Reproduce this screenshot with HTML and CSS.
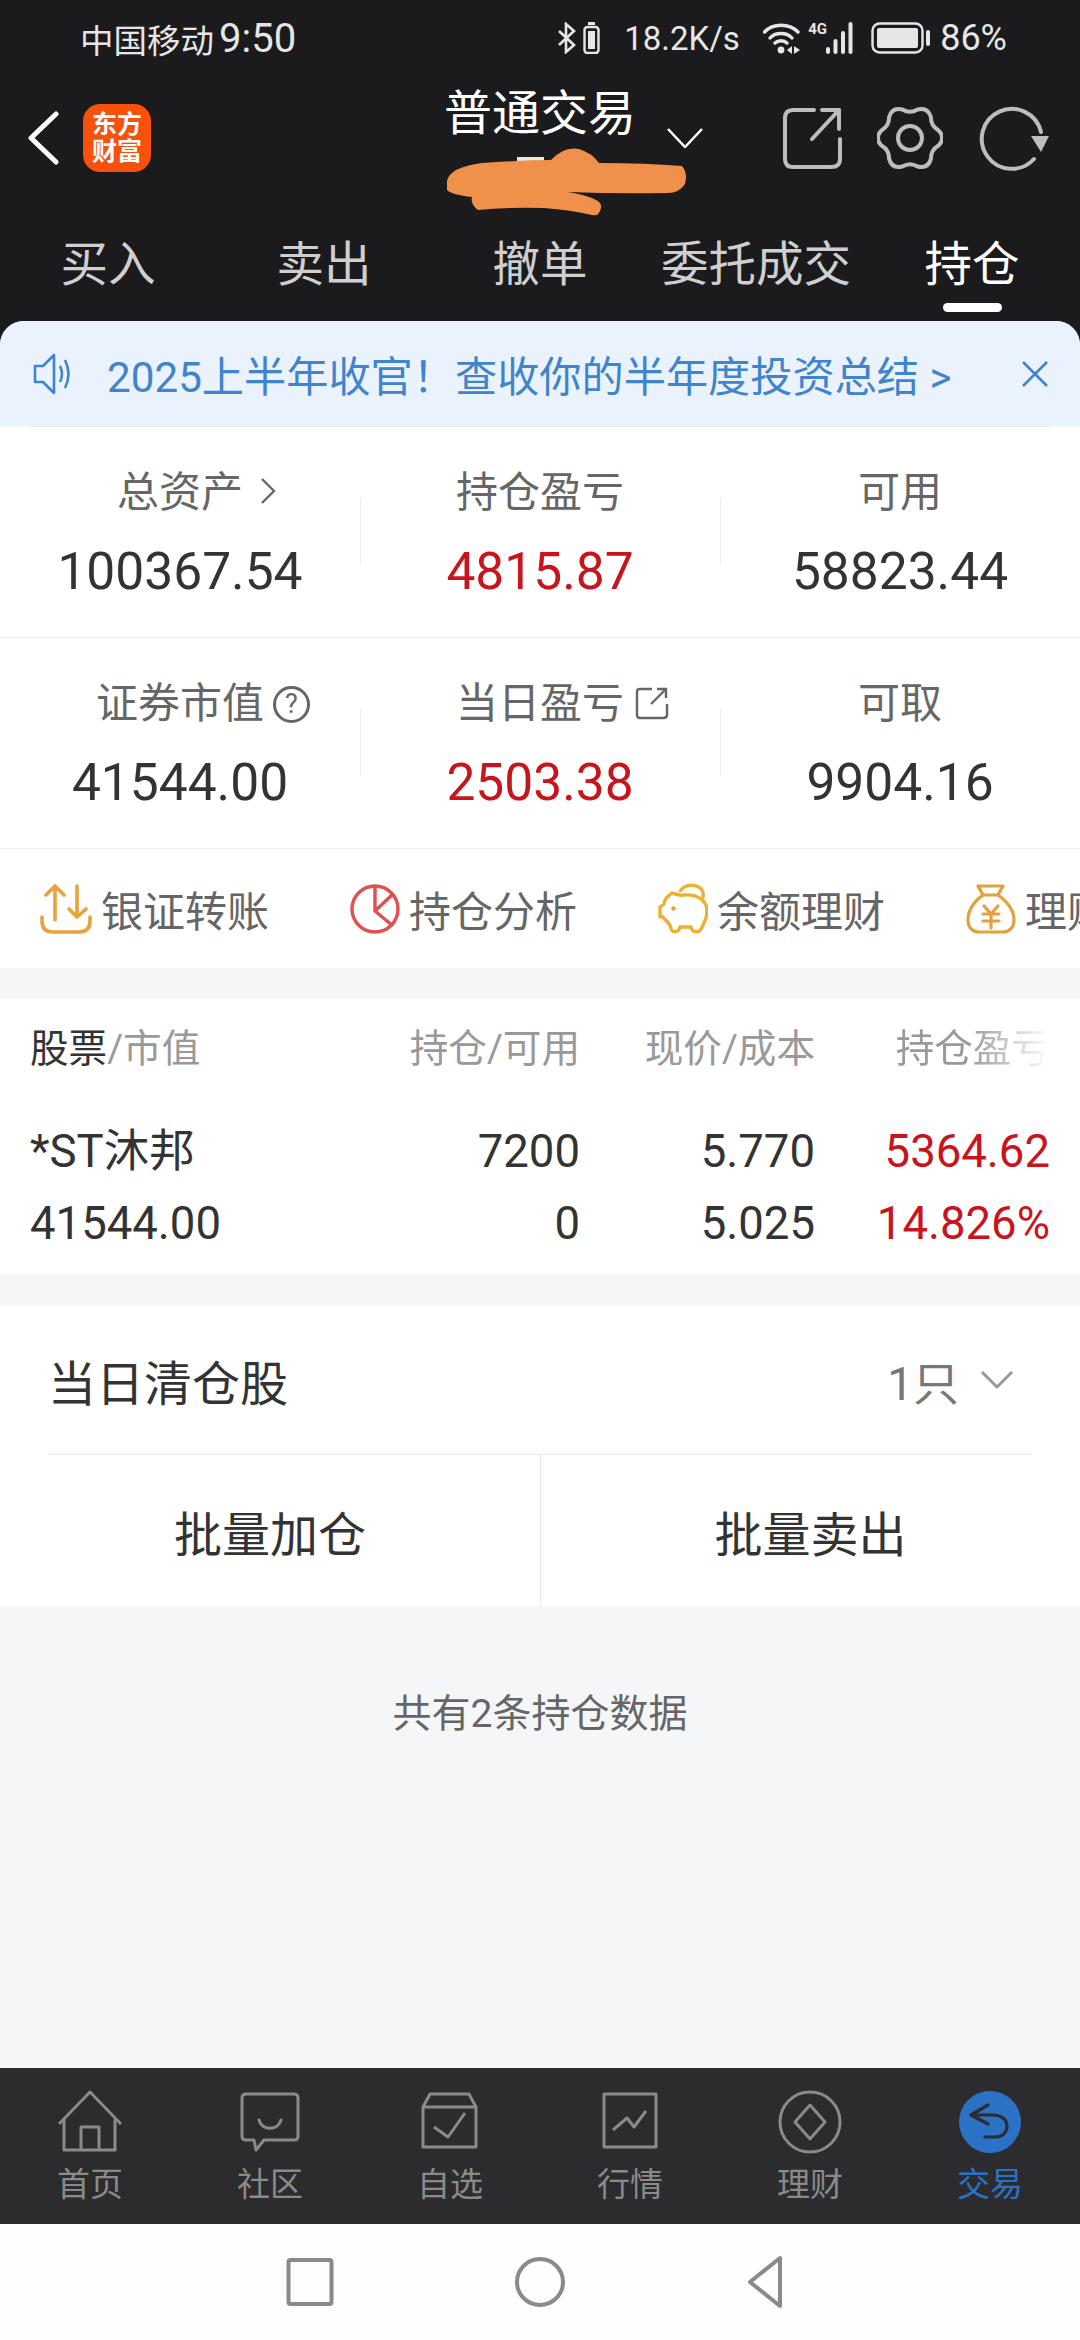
FILE: index.html
```html
<!DOCTYPE html>
<html lang="zh-CN">
<head>
<meta charset="utf-8">
<title>普通交易</title>
<link rel="stylesheet" href="styles.css">
</head>
<body>
<div class="screen">
  <div class="status">
    <div class="status-left">中国移动<span class="clock">9:50</span></div>
    <div class="status-right">
      <svg class="st-bt" width="19" height="32" viewBox="0 0 19 32"><path d="M2 9 L17 23 L9 30 V2 L17 9 L2 23" fill="none" stroke="#e6e6e6" stroke-width="2.6"/></svg>
      <svg class="st-mini" width="17" height="32" viewBox="0 0 17 32"><rect x="1.5" y="5" width="14" height="26" rx="3" fill="none" stroke="#e6e6e6" stroke-width="2.4"/><rect x="5" y="9" width="7" height="18" fill="#e6e6e6"/><rect x="5" y="0" width="7" height="3" fill="#e6e6e6"/></svg>
      <span class="st-speed">18.2K/s</span>
      <svg class="st-wifi" width="38" height="33" viewBox="0 0 38 33"><g fill="none" stroke="#e6e6e6" stroke-width="3.4" stroke-linecap="round"><path d="M1.5 10 C10 1 26 1 35 10"/><path d="M7 16 C12 10 24 10 29 16"/><path d="M12 21 C15 18 21 18 24 21"/></g><circle cx="18" cy="28" r="3.4" fill="#e6e6e6"/><path d="M29 24 V32 L24 28Z M31 24 V32 L37 28Z" fill="#e6e6e6"/></svg>
      <div class="st-signal">
        <span class="st-4g">4G</span>
        <svg width="33" height="32" viewBox="0 0 33 32"><g fill="#e6e6e6"><rect x="0" y="25" width="4" height="7" rx="2"/><rect x="7.500" y="17" width="4" height="15" rx="2"/><rect x="15" y="9" width="4" height="23" rx="2"/><rect x="22.500" y="0" width="4" height="32" rx="2"/></g></svg>
      </div>
      <svg class="st-batt" width="60" height="32" viewBox="0 0 60 32"><rect x="1.500" y="1.500" width="50" height="29" rx="7" fill="none" stroke="#e6e6e6" stroke-width="2.400"/><rect x="6" y="6" width="41" height="20" rx="2" fill="#e6e6e6"/><rect x="55" y="8" width="4" height="16" rx="2" fill="#e6e6e6"/></svg>
      <span class="st-pct">86%</span>
    </div>
  </div>

  <div class="appbar">
    <div class="appbar-left">
      <svg class="back" width="32" height="54" viewBox="0 0 32 54"><path d="M29 3 L4 27 L29 51" fill="none" stroke="#fff" stroke-width="5" stroke-linecap="round" stroke-linejoin="round"/></svg>
      <div class="logo">东方<br>财富</div>
    </div>
    <div class="appbar-title">
      <span class="title-text">普通交易</span>
      <svg class="title-caret" width="36" height="20" viewBox="0 0 36 20"><path d="M1 1 L18 19 L35 1" fill="none" stroke="#fff" stroke-width="2.500"/></svg>
      <svg class="account-mask" width="240" height="68" viewBox="0 0 240 68"><rect x="71" y="9" width="27" height="9" fill="#e9e4de"/><path d="M1 33 Q4 19 36 15 Q80 12 105 12 Q118 -2 133 1 Q146 5 153 15 Q200 15 236 18 Q242 25 239 36 Q233 45 222 45 Q170 46 122 44 Q158 50 155 60 Q153 69 146 67 Q125 62 98 60 Q60 59 32 62 Q24 56 26 49 Q6 47 1 42Z" fill="#ef914a"/></svg>
    </div>
    <div class="appbar-tools">
      <svg width="60" height="64" viewBox="0 0 60 64"><g fill="none" stroke="#bdbdbd" stroke-width="4" stroke-linecap="round" stroke-linejoin="round"><path d="M32 4 H11 Q3 4 3 12 V53 Q3 61 11 61 H49 Q58 61 58 53 V33"/><path d="M30 33 L57 4"/><path d="M40 4 H57 V23"/></g></svg>
      <svg width="66" height="66" viewBox="0 0 66 66"><path d="M61.500 25.400 Q69 33 61.500 40.600 Q53.800 45 53.900 53.900 Q51 64.200 40.600 61.500 Q33 57 25.400 61.500 Q15 64.200 12.100 53.900 Q12.200 45 4.500 40.600 Q-3 33 4.500 25.400 Q12.200 21 12.100 12.100 Q15 1.800 25.400 4.500 Q33 9 40.600 4.500 Q51 1.800 53.900 12.100 Q53.800 21 61.500 25.400Z" fill="none" stroke="#bdbdbd" stroke-width="4"/><circle cx="33" cy="33" r="12" fill="none" stroke="#bdbdbd" stroke-width="4"/></svg>
      <svg width="74" height="68" viewBox="0 0 74 68"><path d="M63 28 A30 30 0 1 0 56 55" fill="none" stroke="#bdbdbd" stroke-width="4" stroke-linecap="round"/><path d="M53 32 H71 L63 48Z" fill="#bdbdbd"/></svg>
    </div>
  </div>

  <div class="tabs">
    <div class="tab">买入</div>
    <div class="tab">卖出</div>
    <div class="tab">撤单</div>
    <div class="tab">委托成交</div>
    <div class="tab tab-active">持仓<i class="tab-bar"></i></div>
  </div>

  <div class="content">
    <div class="notice">
      <svg class="notice-icon" width="42" height="42" viewBox="0 0 42 42"><g fill="none" stroke="#3f84cc" stroke-width="2.600" stroke-linejoin="round"><path d="M2 13 H10 L21 2 V40 L10 29 H2Z"/><path d="M27 13 Q31 21 27 29"/><path d="M32 7 Q39 21 32 35"/></g></svg>
      <span class="notice-text">2025上半年收官！查收你的半年度投资总结 &gt;</span>
      <svg class="notice-close" width="28" height="28" viewBox="0 0 28 28"><path d="M2 2 L26 26 M26 2 L2 26" fill="none" stroke="#3f84cc" stroke-width="2.600"/></svg>
    </div>
    <div class="notice-rule"></div>

    <div class="stats">
      <div class="stat">
        <div class="stat-label"><span class="label-anchor">总资产<svg class="hang hang-chevron" width="16" height="28" viewBox="0 0 16 28"><path d="M2 2 L14 14 L2 26" fill="none" stroke="#666" stroke-width="2.400"/></svg></span></div>
        <div class="stat-value">100367.54</div>
      </div>
      <div class="stat stat-split">
        <div class="stat-label">持仓盈亏</div>
        <div class="stat-value up">4815.87</div>
      </div>
      <div class="stat stat-split">
        <div class="stat-label">可用</div>
        <div class="stat-value">58823.44</div>
      </div>
    </div>
    <div class="stats">
      <div class="stat">
        <div class="stat-label"><span class="label-anchor">证券市值<span class="hang hang-help">?</span></span></div>
        <div class="stat-value">41544.00</div>
      </div>
      <div class="stat stat-split">
        <div class="stat-label"><span class="label-anchor">当日盈亏<svg class="hang hang-share" width="34" height="34" viewBox="0 0 34 34"><g fill="none" stroke="#666" stroke-width="2.400"><path d="M17 3 H5 Q2 3 2 6 V29 Q2 32 5 32 H28 Q32 32 32 29 V18"/><path d="M16 18 L31 3"/><path d="M22 3 H31 V12"/></g></svg></span></div>
        <div class="stat-value up">2503.38</div>
      </div>
      <div class="stat stat-split">
        <div class="stat-label">可取</div>
        <div class="stat-value">9904.16</div>
      </div>
    </div>

    <div class="actions">
      <div class="action">
        <svg width="52" height="50" viewBox="0 0 52 50"><g fill="none" stroke="#e8a33d" stroke-width="3.600" stroke-linecap="round" stroke-linejoin="round"><path d="M15 36 V2 M6 11 L15 2 L24 11"/><path d="M37 2 V33 M29 25 L37 33 L46 25"/><path d="M2 33 V37 Q2 48 13 48 H39 Q50 48 50 37 V33"/></g></svg>
        <span>银证转账</span>
      </div>
      <div class="action">
        <svg width="50" height="50" viewBox="0 0 50 50"><g fill="none" stroke="#e0504f" stroke-width="3.400" stroke-linejoin="round"><circle cx="25" cy="25" r="23"/><path d="M25 2 V27 L43 10 M25 27 L43 42"/></g></svg>
        <span>持仓分析</span>
      </div>
      <div class="action">
        <svg width="50" height="52" viewBox="0 0 50 52"><g fill="none" stroke="#eeb030" stroke-width="3.400" stroke-linejoin="round"><path d="M14 10 C20 12 22 13 26 12 C40 11 49 18 49 28 C49 36 46 40 43 46 C41 50 34 50 33 44 H22 C21 50 13 50 13 45 C12 40 8 38 5 34 H2 V24 L6 21 C6 16 10 13 14 10Z"/><path d="M22 9 C25 0 42 0 45 9 C46 13 45 15 44 17"/></g><circle cx="15.500" cy="25.500" r="2.200" fill="#e59f3b"/></svg>
        <span>余额理财</span>
      </div>
      <div class="action">
        <svg width="50" height="50" viewBox="0 0 50 50"><g fill="none" stroke="#e59f3b" stroke-width="3.200" stroke-linejoin="round" stroke-linecap="round"><path d="M17 11 L12 2 H37 L32 11Z"/><path d="M17 11 C6 19 2 27 2 36 C2 44 7 48 13 48 H37 C43 48 48 44 48 36 C48 27 43 19 32 11"/><path d="M18 22 L25 30 L32 22 M17 30 H33 M17 37 H33 M25 30 V44"/></g></svg>
        <span>理财产品</span>
      </div>
    </div>

    <div class="holdings">
      <div class="grid grid-head">
        <div><span class="head-strong">股票</span>/市值</div>
        <div class="num">持仓/可用</div>
        <div class="num">现价/成本</div>
        <div class="num fade-out">持仓盈亏</div>
      </div>
      <div class="grid grid-row">
        <div>*ST沐邦</div>
        <div class="num">7200</div>
        <div class="num">5.770</div>
        <div class="num up">5364.62</div>
      </div>
      <div class="grid grid-row">
        <div>41544.00</div>
        <div class="num">0</div>
        <div class="num">5.025</div>
        <div class="num up">14.826%</div>
      </div>
    </div>

    <div class="cleared">
      <div class="cleared-head">
        <span class="cleared-title">当日清仓股</span>
        <span class="cleared-count">1只<svg width="34" height="20" viewBox="0 0 34 20"><path d="M2 2 L17 17 L32 2" fill="none" stroke="#999" stroke-width="3"/></svg></span>
      </div>
      <div class="batch">
        <div class="batch-btn">批量加仓</div>
        <div class="batch-btn">批量卖出</div>
      </div>
    </div>

    <div class="footnote">共有2条持仓数据</div>
  </div>

  <nav class="nav">
    <div class="nav-item">
      <svg width="64" height="64" viewBox="0 0 64 64"><g fill="none" stroke="#8a8a8a" stroke-width="3" stroke-linejoin="round"><path d="M1 34 L32 2 L63 34"/><path d="M6 29 V60 H57 V29"/><path d="M23 60 V37 H41 V60"/></g></svg>
      <span>首页</span>
    </div>
    <div class="nav-item">
      <svg width="64" height="64" viewBox="0 0 64 64"><g fill="none" stroke="#8a8a8a" stroke-width="3" stroke-linejoin="round"><path d="M8 4 H56 Q60 4 60 8 V46 Q60 50 56 50 H26 L18 60 L16 50 H8 Q4 50 4 46 V8 Q4 4 8 4Z"/><path d="M21 30 C24 41 40 41 43 30" stroke-linecap="round"/></g></svg>
      <span>社区</span>
    </div>
    <div class="nav-item">
      <svg width="64" height="64" viewBox="0 0 64 64"><g fill="none" stroke="#8a8a8a" stroke-width="3" stroke-linejoin="round"><path d="M5 17 V57 H58 V17Z"/><path d="M5 17 L12 4 H51 L58 17"/><path d="M16 37 L30 47 L47 23"/></g></svg>
      <span>自选</span>
    </div>
    <div class="nav-item">
      <svg width="64" height="64" viewBox="0 0 64 64"><g fill="none" stroke="#8a8a8a" stroke-width="3" stroke-linejoin="round"><rect x="6" y="4" width="52" height="53"/><path d="M15 40 L29 28 L36 37 L48 21"/></g></svg>
      <span>行情</span>
    </div>
    <div class="nav-item">
      <svg width="64" height="64" viewBox="0 0 64 64"><g fill="none" stroke="#8a8a8a" stroke-width="3" stroke-linejoin="round"><circle cx="32" cy="32" r="30"/><path d="M32 15 L47 32 L32 49 L17 32Z"/></g></svg>
      <span>理财</span>
    </div>
    <div class="nav-item nav-active">
      <svg width="64" height="64" viewBox="0 0 64 64"><circle cx="32" cy="32" r="31" fill="#2b72c6"/><g fill="none" stroke="#2c2c2e" stroke-width="3.200" stroke-linecap="round" stroke-linejoin="round"><path d="M30 15 L13 25 L30 34"/><path d="M13 25 H34 C44 25 49 30 49 36 C49 43 44 47 38 47 H27"/></g></svg>
      <span>交易</span>
    </div>
  </nav>

  <div class="sysbar">
    <svg width="60" height="60" viewBox="0 0 60 60"><rect x="8.500" y="8" width="43" height="44" rx="2" fill="none" stroke="#8a8a8a" stroke-width="4"/></svg>
    <svg width="60" height="60" viewBox="0 0 60 60"><circle cx="30" cy="30" r="23" fill="none" stroke="#8a8a8a" stroke-width="4"/></svg>
    <svg width="60" height="60" viewBox="0 0 60 60"><path d="M40 6 V54 L10 30Z" fill="none" stroke="#8a8a8a" stroke-width="4" stroke-linejoin="round"/></svg>
  </div>
</div>
</body>
</html>
```

FILE: styles.css
```css
* { box-sizing: border-box; }

html, body {
  margin: 0;
  padding: 0;
}

body {
  width: 1080px;
  height: 2340px;
  overflow: hidden;
  font-family: Roboto, "Noto Sans CJK SC", sans-serif;
  color: #333;
}

.screen {
  width: 1080px;
  height: 2340px;
  display: flex;
  flex-direction: column;
  background: #1b1b1d;
}

/* system status line */
.status {
  height: 76px;
  flex: none;
  display: flex;
  align-items: center;
  justify-content: space-between;
  padding: 0 73px 0 80px;
  color: #e6e6e6;
}

.status-left {
  font-size: 33.500px;
  display: flex;
  align-items: center;
}

.clock {
  font-size: 40px;
  margin-left: 5px;
}

.status-right {
  display: flex;
  align-items: center;
}

.st-mini { margin-left: 7px; }
.st-speed { font-size: 33px; margin-left: 24px; width: 118px; white-space: nowrap; }
.st-wifi { margin-left: 21px; }

.st-signal {
  display: flex;
  align-items: flex-start;
  margin-left: 7px;
  height: 32px;
  position: relative;
  width: 51px;
  justify-content: flex-end;
}

.st-4g {
  position: absolute;
  left: 0;
  top: -2px;
  font-size: 15px;
  font-weight: 700;
  line-height: 18px;
}

.st-batt { margin-left: 12px; }
.st-pct { font-size: 36px; margin-left: 9px; }

/* title bar */
.appbar {
  height: 124px;
  flex: none;
  display: grid;
  grid-template-columns: 1fr 192px 1fr;
  color: #fff;
}

.appbar-left {
  display: flex;
  align-items: center;
  padding-left: 27px;
  gap: 24px;
}

.logo {
  width: 68px;
  height: 68px;
  border-radius: 17px;
  background: #f8510c;
  color: #fff;
  font-size: 25px;
  font-weight: 700;
  line-height: 27px;
  text-align: center;
  padding-top: 7px;
}

.appbar-title {
  position: relative;
  padding-top: 8px;
  white-space: nowrap;
}

.title-text {
  display: block;
  font-size: 48px;
  line-height: 60px;
  text-align: center;
}

.title-caret {
  position: absolute;
  left: 223px;
  top: 52px;
}

.account-mask {
  position: absolute;
  left: 2px;
  top: 72px;
}

.appbar-tools {
  display: flex;
  align-items: center;
  gap: 35px;
  padding-left: 146px;
}

/* trade tabs */
.tabs {
  height: 121px;
  flex: none;
  display: grid;
  grid-template-columns: repeat(5, 216px);
}

.tab {
  padding-top: 35px;
  font-size: 47.500px;
  line-height: 60px;
  color: #cfcfcf;
  text-align: center;
  white-space: nowrap;
  display: flex;
  flex-direction: column;
  align-items: center;
}

.tab-active { color: #fff; }

.tab-bar {
  display: block;
  width: 59px;
  height: 9px;
  margin-top: 8px;
  border-radius: 5px;
  background: #fff;
}

/* light panel */
.content {
  flex: 1;
  min-height: 0;
  display: flex;
  flex-direction: column;
  background: #f5f6f8;
  border-radius: 24px 24px 0 0;
  overflow: hidden;
}

.notice {
  height: 105px;
  flex: none;
  display: flex;
  align-items: center;
  background: #eaf3fd;
  color: #3f84cc;
  padding: 0 31px 0 33px;
}

.notice-text {
  flex: 1;
  margin-left: 32px;
  font-size: 42.200px;
  white-space: nowrap;
}

.notice-rule {
  height: 1px;
  flex: none;
  margin: 0 30px;
  background: #e6e6e6;
}

/* account figures */
.stats {
  flex: none;
  height: 211px;
  display: grid;
  grid-template-columns: repeat(3, 360px);
  background: #fff;
  border-bottom: 1px solid #eeeeee;
}

.stat {
  position: relative;
  padding-top: 38px;
  display: flex;
  flex-direction: column;
  align-items: center;
  gap: 19px;
}

.stat-split::before {
  content: "";
  position: absolute;
  left: 0;
  top: 71px;
  width: 1px;
  height: 67px;
  background: #ececec;
}

.stat-label {
  font-size: 42px;
  line-height: 56px;
  color: #666;
  white-space: nowrap;
}

.stat-value {
  font-size: 51.500px;
  line-height: 64px;
  color: #333;
  white-space: nowrap;
}

.up { color: #c8141c; }

.label-anchor {
  position: relative;
  display: inline-block;
}

.hang { position: absolute; }

.hang-chevron {
  left: calc(100% + 17px);
  top: 12px;
}

.hang-help {
  left: calc(100% + 9px);
  top: 10px;
  width: 37px;
  height: 37px;
  border: 3px solid #666;
  border-radius: 50%;
  font-size: 27px;
  line-height: 31px;
  text-align: center;
  color: #666;
}

.hang-share {
  left: calc(100% + 11px);
  top: 10px;
}

/* shortcut strip */
.actions {
  flex: none;
  height: 119px;
  display: flex;
  align-items: center;
  gap: 81px;
  padding-left: 40px;
  background: #fff;
  overflow: hidden;
}

.action {
  flex: none;
  display: flex;
  align-items: center;
  gap: 9px;
  font-size: 42px;
  color: #666;
  white-space: nowrap;
}

/* position table */
.holdings {
  flex: none;
  height: 276px;
  margin-top: 31px;
  padding: 25px 30px 0;
  background: #fff;
}

.grid {
  display: grid;
  grid-template-columns: 360px 190px 235px 235px;
  white-space: nowrap;
}

.grid-head {
  font-size: 38.600px;
  line-height: 50px;
  color: #999;
  margin-bottom: 42px;
}

.head-strong { color: #333; }

.grid-row {
  font-size: 45.500px;
  line-height: 72px;
  color: #333;
}

.num { text-align: right; }

.fade-out {
  -webkit-mask-image: linear-gradient(to right, #000 65%, transparent 100%);
  mask-image: linear-gradient(to right, #000 65%, transparent 100%);
}

/* closed-out section */
.cleared {
  flex: none;
  height: 300px;
  margin-top: 31px;
  background: #fff;
}

.cleared-head {
  height: 149px;
  margin: 0 48px;
  display: flex;
  align-items: center;
  justify-content: space-between;
  border-bottom: 1px solid #e9e9e9;
}

.cleared-title {
  font-size: 48px;
  color: #333;
}

.cleared-count {
  display: flex;
  align-items: center;
  gap: 21px;
  padding-right: 18px;
  font-size: 46px;
  color: #777;
}

.batch {
  height: 151px;
  display: grid;
  grid-template-columns: 1fr 1fr;
}

.batch-btn {
  display: flex;
  align-items: center;
  justify-content: center;
  font-size: 48px;
  color: #333;
}

.batch-btn + .batch-btn { border-left: 1px solid #e9e9e9; }

.footnote {
  flex: 1;
  padding-top: 80px;
  font-size: 39px;
  line-height: 56px;
  color: #666;
  text-align: center;
}

/* bottom tab bar */
.nav {
  height: 156px;
  flex: none;
  display: grid;
  grid-template-columns: repeat(6, 180px);
  padding-top: 22px;
  background: #2c2c2e;
}

.nav-item {
  display: flex;
  flex-direction: column;
  align-items: center;
  font-size: 33px;
  line-height: 44px;
  color: #8a8a8a;
}

.nav-item span { margin-top: 9px; }
.nav-active { color: #2b72c6; }

/* system navigation */
.sysbar {
  height: 116px;
  flex: none;
  display: flex;
  align-items: center;
  justify-content: center;
  gap: 170px;
  background: #fdfdfd;
}
```
